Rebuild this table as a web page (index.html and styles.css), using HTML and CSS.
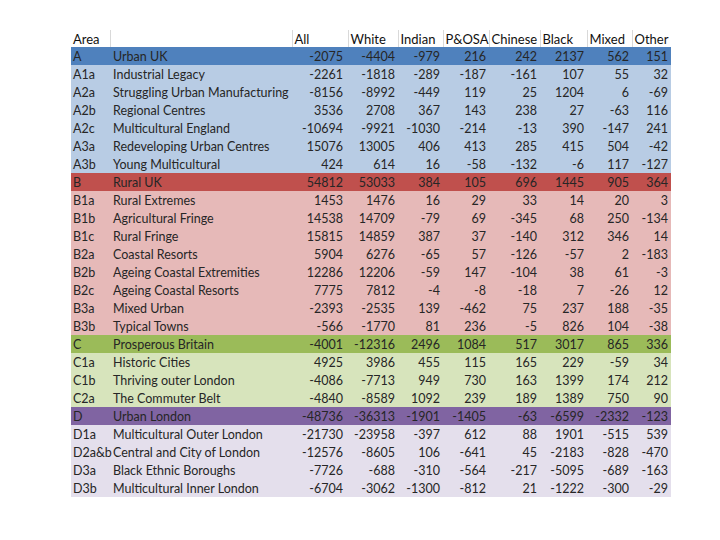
FILE: index.html
```html
<!DOCTYPE html>
<html>
<head>
<meta charset="utf-8">
<link rel="stylesheet" href="styles.css">
</head>
<body>
<div class="page">
<table class="grid">
<colgroup>
<col class="c-code"><col class="c-name"><col class="c-all"><col class="c-white"><col class="c-indian"><col class="c-posa"><col class="c-chinese"><col class="c-black"><col class="c-mixed"><col class="c-other">
</colgroup>
<thead>
<tr class="head"><th>Area</th><th></th><th>All</th><th>White</th><th>Indian</th><th>P&amp;OSA</th><th>Chinese</th><th>Black</th><th>Mixed</th><th>Other</th></tr>
</thead>
<tbody>
<tr class="blue-main"><td>A</td><td>Urban UK</td><td>-2075</td><td>-4404</td><td>-979</td><td>216</td><td>242</td><td>2137</td><td>562</td><td>151</td></tr>
<tr class="blue"><td>A1a</td><td>Industrial Legacy</td><td>-2261</td><td>-1818</td><td>-289</td><td>-187</td><td>-161</td><td>107</td><td>55</td><td>32</td></tr>
<tr class="blue"><td>A2a</td><td>Struggling Urban Manufacturing</td><td>-8156</td><td>-8992</td><td>-449</td><td>119</td><td>25</td><td>1204</td><td>6</td><td>-69</td></tr>
<tr class="blue"><td>A2b</td><td>Regional Centres</td><td>3536</td><td>2708</td><td>367</td><td>143</td><td>238</td><td>27</td><td>-63</td><td>116</td></tr>
<tr class="blue"><td>A2c</td><td>Multicultural England</td><td>-10694</td><td>-9921</td><td>-1030</td><td>-214</td><td>-13</td><td>390</td><td>-147</td><td>241</td></tr>
<tr class="blue"><td>A3a</td><td>Redeveloping Urban Centres</td><td>15076</td><td>13005</td><td>406</td><td>413</td><td>285</td><td>415</td><td>504</td><td>-42</td></tr>
<tr class="blue"><td>A3b</td><td>Young Multicultural</td><td>424</td><td>614</td><td>16</td><td>-58</td><td>-132</td><td>-6</td><td>117</td><td>-127</td></tr>
<tr class="red-main"><td>B</td><td>Rural UK</td><td>54812</td><td>53033</td><td>384</td><td>105</td><td>696</td><td>1445</td><td>905</td><td>364</td></tr>
<tr class="red"><td>B1a</td><td>Rural Extremes</td><td>1453</td><td>1476</td><td>16</td><td>29</td><td>33</td><td>14</td><td>20</td><td>3</td></tr>
<tr class="red"><td>B1b</td><td>Agricultural Fringe</td><td>14538</td><td>14709</td><td>-79</td><td>69</td><td>-345</td><td>68</td><td>250</td><td>-134</td></tr>
<tr class="red"><td>B1c</td><td>Rural Fringe</td><td>15815</td><td>14859</td><td>387</td><td>37</td><td>-140</td><td>312</td><td>346</td><td>14</td></tr>
<tr class="red"><td>B2a</td><td>Coastal Resorts</td><td>5904</td><td>6276</td><td>-65</td><td>57</td><td>-126</td><td>-57</td><td>2</td><td>-183</td></tr>
<tr class="red"><td>B2b</td><td>Ageing Coastal Extremities</td><td>12286</td><td>12206</td><td>-59</td><td>147</td><td>-104</td><td>38</td><td>61</td><td>-3</td></tr>
<tr class="red"><td>B2c</td><td>Ageing Coastal Resorts</td><td>7775</td><td>7812</td><td>-4</td><td>-8</td><td>-18</td><td>7</td><td>-26</td><td>12</td></tr>
<tr class="red"><td>B3a</td><td>Mixed Urban</td><td>-2393</td><td>-2535</td><td>139</td><td>-462</td><td>75</td><td>237</td><td>188</td><td>-35</td></tr>
<tr class="red"><td>B3b</td><td>Typical Towns</td><td>-566</td><td>-1770</td><td>81</td><td>236</td><td>-5</td><td>826</td><td>104</td><td>-38</td></tr>
<tr class="green-main"><td>C</td><td>Prosperous Britain</td><td>-4001</td><td>-12316</td><td>2496</td><td>1084</td><td>517</td><td>3017</td><td>865</td><td>336</td></tr>
<tr class="green"><td>C1a</td><td>Historic Cities</td><td>4925</td><td>3986</td><td>455</td><td>115</td><td>165</td><td>229</td><td>-59</td><td>34</td></tr>
<tr class="green"><td>C1b</td><td>Thriving outer London</td><td>-4086</td><td>-7713</td><td>949</td><td>730</td><td>163</td><td>1399</td><td>174</td><td>212</td></tr>
<tr class="green"><td>C2a</td><td>The Commuter Belt</td><td>-4840</td><td>-8589</td><td>1092</td><td>239</td><td>189</td><td>1389</td><td>750</td><td>90</td></tr>
<tr class="purple-main"><td>D</td><td>Urban London</td><td>-48736</td><td>-36313</td><td>-1901</td><td>-1405</td><td>-63</td><td>-6599</td><td>-2332</td><td>-123</td></tr>
<tr class="purple"><td>D1a</td><td>Multicultural Outer London</td><td>-21730</td><td>-23958</td><td>-397</td><td>612</td><td>88</td><td>1901</td><td>-515</td><td>539</td></tr>
<tr class="purple"><td>D2a&amp;b</td><td>Central and City of London</td><td>-12576</td><td>-8605</td><td>106</td><td>-641</td><td>45</td><td>-2183</td><td>-828</td><td>-470</td></tr>
<tr class="purple"><td>D3a</td><td>Black Ethnic Boroughs</td><td>-7726</td><td>-688</td><td>-310</td><td>-564</td><td>-217</td><td>-5095</td><td>-689</td><td>-163</td></tr>
<tr class="purple"><td>D3b</td><td>Multicultural Inner London</td><td>-6704</td><td>-3062</td><td>-1300</td><td>-812</td><td>21</td><td>-1222</td><td>-300</td><td>-29</td></tr>
</tbody>
</table>
</div>
</body>
</html>
```
FILE: styles.css
```css
html, body {
  margin: 0;
  padding: 0;
  background: #ffffff;
}
.page {
  padding: 30px 0 0 71px;
  font-family: Lato, "Open Sans", sans-serif;
  font-size: 12.5px;
  color: #262626;
}
.grid {
  border-collapse: collapse;
  table-layout: fixed;
  width: 600px;
}
.c-code { width: 39px; }
.c-name { width: 182px; }
.c-all { width: 56px; }
.c-white { width: 50px; }
.c-indian { width: 45px; }
.c-posa { width: 46px; }
.c-chinese { width: 51px; }
.c-black { width: 47px; }
.c-mixed { width: 45px; }
.c-other { width: 39px; }
.grid th {
  height: 17px;
  padding: 0 0 0 2px;
  text-align: left;
  font-weight: normal;
  font-size: 13px;
  color: #111;
  border-left: 1px solid #d9d9d9;
  white-space: nowrap;
  overflow: hidden;
}
.grid th:first-child {
  border-left: none;
}
.grid td {
  height: 18px;
  padding: 0 3px 0 0;
  text-align: right;
  white-space: nowrap;
  overflow: hidden;
}
.grid td:nth-child(1) {
  text-align: left;
  padding: 0 0 0 2px;
  overflow: visible;
}
.grid td:nth-child(2) {
  text-align: left;
  padding: 0 0 0 3px;
}
.grid td:nth-child(3) {
  padding-right: 5px;
}
.blue-main { background: #4f81bd; }
.blue { background: #b8cce4; }
.red-main { background: #c0504d; }
.red { background: #e6b9b8; }
.green-main { background: #9bbb59; }
.green { background: #d7e4bc; }
.purple-main { background: #8064a2; }
.purple { background: #e4dfec; }
```
